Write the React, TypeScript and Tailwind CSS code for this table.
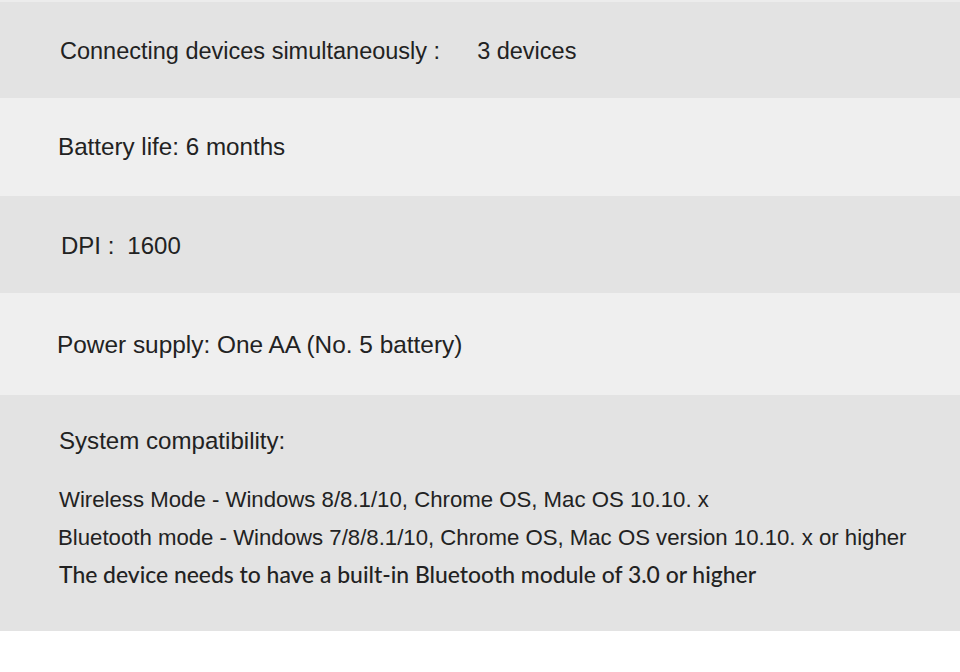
export default function App() {
  /* ---------- DATA ---------- */
  const arial = { fontFamily: '"Liberation Sans", Arial, sans-serif' };

  return (
    <div className="w-[960px] h-[672px] bg-white text-[#222222] flex flex-col" style={arial}>
      {/* thin top strip */}
      <div className="h-[2px] bg-[#ececec]" />

      {/* CONNECTING DEVICES */}
      <div className="h-[96px] bg-[#e3e3e3] flex items-center pl-[60px] pt-[4px] text-[23.5px]">
        <span>Connecting devices simultaneously :</span>
        <span className="ml-[37px]">3 devices</span>
      </div>

      {/* BATTERY */}
      <div className="h-[98px] bg-[#efefef] flex items-center pl-[58px] text-[24.2px]">
        Battery life: 6 months
      </div>

      {/* DPI */}
      <div className="h-[97px] bg-[#e3e3e3] flex items-center pl-[61px] pt-[2px] text-[24px]">
        <span>DPI :</span>
        <span className="ml-[13px]">1600</span>
      </div>

      {/* POWER */}
      <div className="h-[102px] bg-[#efefef] flex items-center pl-[57px] pt-[3px] text-[24.4px]">
        Power supply: One AA (No. 5 battery)
      </div>

      {/* COMPATIBILITY */}
      <div className="h-[236px] bg-[#e3e3e3] pl-[59px] pt-[32px] flex flex-col">
        <p className="text-[24.1px] leading-[28px]">System compatibility:</p>
        <p className="mt-[26px] text-[22.2px] leading-[38px]">
          Wireless Mode - Windows 8/8.1/10, Chrome OS, Mac OS 10.10. x
        </p>
        <p className="-ml-[1px] text-[22.2px] leading-[38px]">
          Bluetooth mode - Windows 7/8/8.1/10, Chrome OS, Mac OS version 10.10. x or higher
        </p>
        <p
          className="text-[22.9px] leading-[38px] font-medium -mt-[2px]"
          style={{ fontFamily: 'Lato, "Open Sans", sans-serif' }}
        >
          The device needs to have a built-in Bluetooth module of 3.0 or higher
        </p>
      </div>
    </div>
  );
}
